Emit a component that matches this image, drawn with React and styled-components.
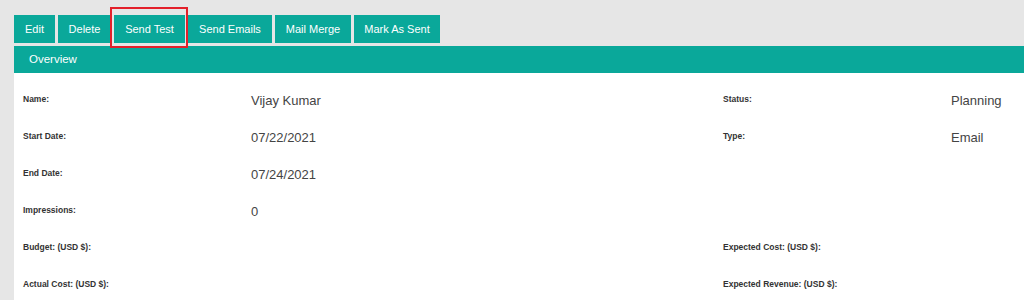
import styled, { createGlobalStyle } from "styled-components";

const GlobalStyle = createGlobalStyle`
  html, body {
    margin: 0;
    padding: 0;
    background: #e6e6e6;
    font-family: "Liberation Sans", Arial, sans-serif;
  }
`;

const actions = [
  { label: "Edit", width: 41 },
  { label: "Delete", width: 53 },
  { label: "Send Test", width: 71, marked: true },
  { label: "Send Emails", width: 84 },
  { label: "Mail Merge", width: 76 },
  { label: "Mark As Sent", width: 86 },
];

const fields = [
  ["Name:", "Vijay Kumar", "Status:", "Planning"],
  ["Start Date:", "07/22/2021", "Type:", "Email"],
  ["End Date:", "07/24/2021", "", ""],
  ["Impressions", "0", "", ""],
  ["Budget: (USD $):", "", "Expected Cost: (USD $):", ""],
  ["Actual Cost: (USD $):", "", "Expected Revenue: (USD $):", ""],
];

const App = () => {
  return (
    <Page>
      <GlobalStyle />
      <Toolbar>
        {actions.map((a) => (
          <ActionButton key={a.label} $w={a.width} $marked={a.marked}>
            {a.label}
          </ActionButton>
        ))}
      </Toolbar>
      <Panel>
        <PanelHeader>Overview</PanelHeader>
        <Details>
          {fields.map((row, i) => (
            <Row key={i}>
              <Label>{row[0] === "Impressions" ? "Impressions:" : row[0]}</Label>
              <Value>{row[1]}</Value>
              <Label>{row[2]}</Label>
              <Value>{row[3]}</Value>
            </Row>
          ))}
        </Details>
      </Panel>
    </Page>
  );
};

const Page = styled.div`
  padding: 15px 0 0 14px;
  min-height: 300px;
  box-sizing: border-box;
`;

const Toolbar = styled.div`
  display: flex;
  gap: 3px;
`;

const ActionButton = styled.button`
  position: relative;
  width: ${(p) => p.$w}px;
  height: 28px;
  padding: 0;
  border: none;
  background: #0aa89a;
  color: #fff;
  font-family: "Liberation Sans", Arial, sans-serif;
  font-size: 11px;
  text-align: center;
  cursor: pointer;
  ${(p) =>
    p.$marked &&
    `
    &::after {
      content: "";
      position: absolute;
      top: -8px;
      left: -4px;
      right: -3px;
      bottom: -5px;
      border: 2px solid #e3202a;
      z-index: 2;
    }
  `}
`;

const Panel = styled.div`
  margin-top: 3px;
  background: #fff;
  min-height: 254px;
`;

const PanelHeader = styled.div`
  height: 27px;
  line-height: 27px;
  padding-left: 15px;
  background: #0aa89a;
  color: #fff;
  font-size: 11.5px;
`;

const Details = styled.div`
  padding: 20px 0 0 9px;
`;

const Row = styled.div`
  display: grid;
  grid-template-columns: 228px 472px 228px 1fr;
  height: 37px;
  align-items: start;
`;

const Label = styled.div`
  font-size: 8.5px;
  font-weight: bold;
  line-height: 12px;
  color: #333;
`;

const Value = styled.div`
  font-size: 13px;
  line-height: 16px;
  color: #444;
`;

export default App;
